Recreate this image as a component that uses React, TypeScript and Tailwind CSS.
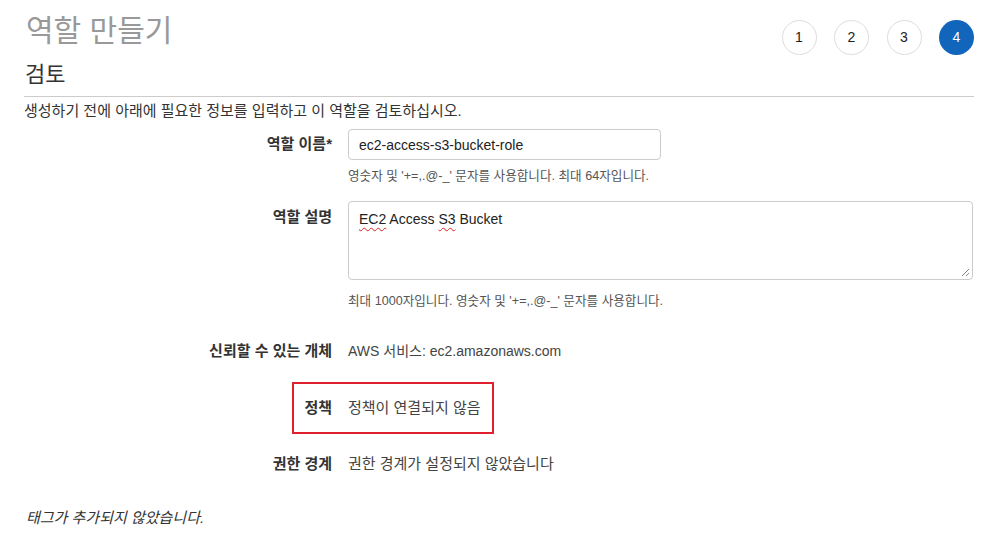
const steps = [1, 2, 3, 4];

const FONT = { fontFamily: '"Liberation Sans", Arial, "Noto Sans CJK KR", sans-serif' };

interface RowProps {
  label: string;
  children: React.ReactNode;
  className?: string;
  labelClass?: string;
}

const Row: React.FC<RowProps> = ({ label, children, className, labelClass }) => (
  <div className={`flex items-start leading-[20px] ${className ?? ""}`}>
    <div
      className={`w-[324px] shrink-0 pr-[16px] text-right text-[15px] font-bold text-[#333] ${labelClass ?? ""}`}
    >
      {label}
    </div>
    <div className="flex-1 text-[14px] text-[#444]">{children}</div>
  </div>
);

const App: React.FC = () => {
  const renderSteps = () => (
    <div className="flex items-center gap-[17.5px] pt-[20px]">
      {steps.map((step) => (
        <div
          key={step}
          className={
            step === 4
              ? "flex h-[35px] w-[35px] items-center justify-center rounded-full bg-[#1166bb] text-[14px] text-white"
              : "flex h-[35px] w-[35px] items-center justify-center rounded-full border border-[#dddddd] bg-white text-[14px] text-[#222]"
          }
        >
          {step}
        </div>
      ))}
    </div>
  );

  return (
    <div className="min-h-[547px] w-[998px] bg-white px-[24px]" style={FONT}>
      <div className="flex items-start justify-between">
        <div>
          <h1 className="pt-[13px] pl-[2px] text-[30px] leading-[36px] text-[#999]">역할 만들기</h1>
          <h2 className="mt-[11px] pl-[1px] text-[22px] leading-[30px] text-[#333]">검토</h2>
        </div>
        {renderSteps()}
      </div>

      <div className="mt-[6px] border-t border-[#cccccc]" />
      <p className="mt-[4px] text-[15px] leading-[20px] text-[#333]">
        생성하기 전에 아래에 필요한 정보를 입력하고 이 역할을 검토하십시오.
      </p>

      <Row label="역할 이름*" className="mt-[8px]" labelClass="pt-[5px]">
        <div className="flex h-[31px] w-[313px] items-center rounded-[4px] border border-[#cccccc] px-[10px] text-[#222]">
          ec2-access-s3-bucket-role
        </div>
        <p className="mt-[6px] text-[12.6px] text-[#555]">
          영숫자 및 '+=,.@-_' 문자를 사용합니다. 최대 64자입니다.
        </p>
      </Row>

      <Row label="역할 설명" className="mt-[15px]" labelClass="pt-[6px]">
        <div className="relative h-[79px] w-[625px] rounded-[4px] border border-[#cccccc] px-[10px] pt-[7px] text-[#222]">
          <span className="underline decoration-[#e02020] decoration-wavy decoration-1 underline-offset-[3px]">
            EC2
          </span>{" "}
          Access{" "}
          <span className="underline decoration-[#e02020] decoration-wavy decoration-1 underline-offset-[3px]">
            S3
          </span>{" "}
          Bucket
          <svg className="absolute right-[2px] bottom-[2px]" width="9" height="9" viewBox="0 0 9 9">
            <path d="M8 1L1 8M8 5L5 8" stroke="#888" strokeWidth="1" />
          </svg>
        </div>
        <p className="mt-[11px] text-[12.6px] text-[#555]">
          최대 1000자입니다. 영숫자 및 '+=,.@-_' 문자를 사용합니다.
        </p>
      </Row>

      <Row label="신뢰할 수 있는 개체" className="mt-[30px]">
        AWS 서비스: ec2.amazonaws.com
      </Row>

      <div className="relative mt-[37px]">
        <Row label="정책">
          <span className="text-[15px]">정책이 연결되지 않음</span>
        </Row>
        <div className="pointer-events-none absolute left-[268px] -top-[16px] h-[52px] w-[202px] border-2 border-[#e0202d]" />
      </div>

      <Row label="권한 경계" className="mt-[36px]">
        <span className="text-[15px]">권한 경계가 설정되지 않았습니다</span>
      </Row>

      <p className="mt-[34px] pl-[2px] text-[15px] leading-[20px] italic text-[#333]">
        태그가 추가되지 않았습니다.
      </p>
    </div>
  );
};

export default App;
